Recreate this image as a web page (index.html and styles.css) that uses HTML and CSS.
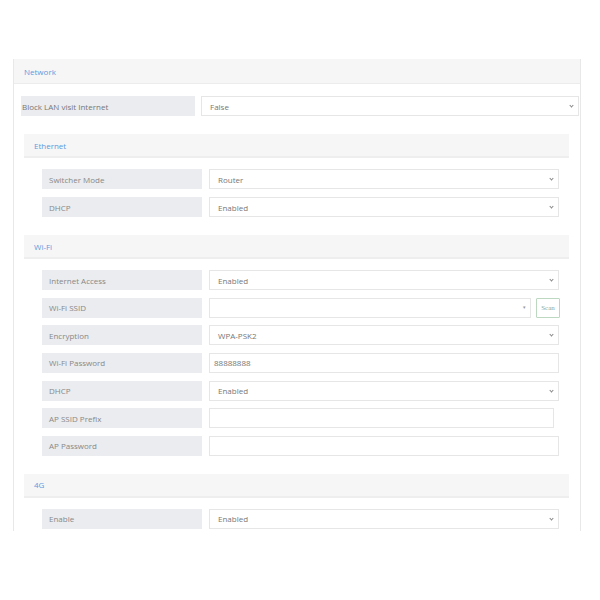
FILE: index.html
```html
<!DOCTYPE html>
<html>
<head>
<meta charset="utf-8">
<link rel="stylesheet" href="styles.css">
</head>
<body>
<div class="panel">
  <div class="panel-head">Network</div>
  <div class="panel-body">
    <div class="row top-row">
      <div class="label wide">Block LAN visit Internet</div>
      <div class="field select wide-field">False<span class="chev"></span></div>
    </div>

    <div class="section">
      <div class="section-head">Ethernet</div>
      <div class="rows">
        <div class="row"><div class="label">Switcher Mode</div><div class="field select">Router<span class="chev"></span></div></div>
        <div class="row"><div class="label">DHCP</div><div class="field select">Enabled<span class="chev"></span></div></div>
      </div>
    </div>

    <div class="section">
      <div class="section-head">Wi-Fi</div>
      <div class="rows wifi">
        <div class="row"><div class="label">Internet Access</div><div class="field select">Enabled<span class="chev"></span></div></div>
        <div class="row"><div class="label">Wi-Fi SSID</div>
          <div class="field ssid"><span class="tri">&#9662;</span></div>
          <div class="scan">Scan</div>
        </div>
        <div class="row"><div class="label">Encryption</div><div class="field select">WPA-PSK2<span class="chev"></span></div></div>
        <div class="row"><div class="label">Wi-Fi Password</div><div class="field input">88888888</div></div>
        <div class="row"><div class="label">DHCP</div><div class="field select">Enabled<span class="chev"></span></div></div>
        <div class="row"><div class="label">AP SSID Prefix</div><div class="field input short"></div></div>
        <div class="row"><div class="label">AP Password</div><div class="field input"></div></div>
      </div>
    </div>

    <div class="section">
      <div class="section-head">4G</div>
      <div class="rows">
        <div class="row"><div class="label">Enable</div><div class="field select">Enabled<span class="chev"></span></div></div>
      </div>
    </div>
  </div>
</div>
</body>
</html>
```
FILE: styles.css
```css
* { box-sizing: border-box; }
body {
  margin: 0;
  background: #fff;
  font-family: "Open Sans", "Noto Sans", sans-serif;
  font-size: 8px;
  color: #777;
}
.panel {
  margin: 59px 0 0 13px;
  width: 568px;
  height: 472px;
  border-left: 1px solid #e8e8e8;
  border-right: 1px solid #e8e8e8;
}
.panel-head {
  height: 25px;
  background: #f6f6f6;
  border-bottom: 1px solid #ececec;
  color: #5b9be0;
  padding-left: 10px;
  display: flex;
  align-items: center;
}
.panel-body {
  padding: 12px 0 0 7px;
}
.row {
  display: flex;
  height: 20px;
  gap: 7px;
}
.top-row { gap: 6px; }
.label {
  width: 160px;
  height: 20px;
  background: #eaecef;
  color: #888;
  padding-left: 7px;
  display: flex;
  align-items: center;
}
.label.wide { width: 174px; padding-left: 1px; color: #777; }
.field {
  position: relative;
  width: 350px;
  height: 20px;
  border: 1px solid #e6e6e6;
  background: #fff;
  color: #777;
  display: flex;
  align-items: center;
  padding-left: 8px;
}
.wide-field { width: 378px; }
.field.input { padding-left: 4px; }
.field.short { width: 345px; }
.chev {
  position: absolute;
  right: 5px;
  top: 7px;
  width: 3px;
  height: 3px;
  border-right: 1px solid #888;
  border-bottom: 1px solid #888;
  transform: rotate(45deg);
}
.field.ssid { width: 322px; }
.tri {
  position: absolute;
  right: 4px;
  top: 5px;
  font-size: 5px;
  color: #999;
}
.scan {
  width: 24px;
  height: 20px;
  margin-left: -2px;
  border: 1px solid #bcd8c0;
  border-radius: 1px;
  color: #8fa993;
  font-size: 7px;
  display: flex;
  align-items: center;
  justify-content: center;
  font-family: "Liberation Serif", serif;
}
.section {
  margin: 18px 0 0 3px;
  width: 545px;
}
.section-head {
  height: 24px;
  background: #f6f6f6;
  border-bottom: 2px solid #eeeeee;
  color: #5b9be0;
  padding-left: 10px;
  display: flex;
  align-items: center;
}
.rows {
  padding: 11px 0 0 18px;
  display: flex;
  flex-direction: column;
  gap: 8px;
}
.rows.wifi { gap: 7.67px; }
```
